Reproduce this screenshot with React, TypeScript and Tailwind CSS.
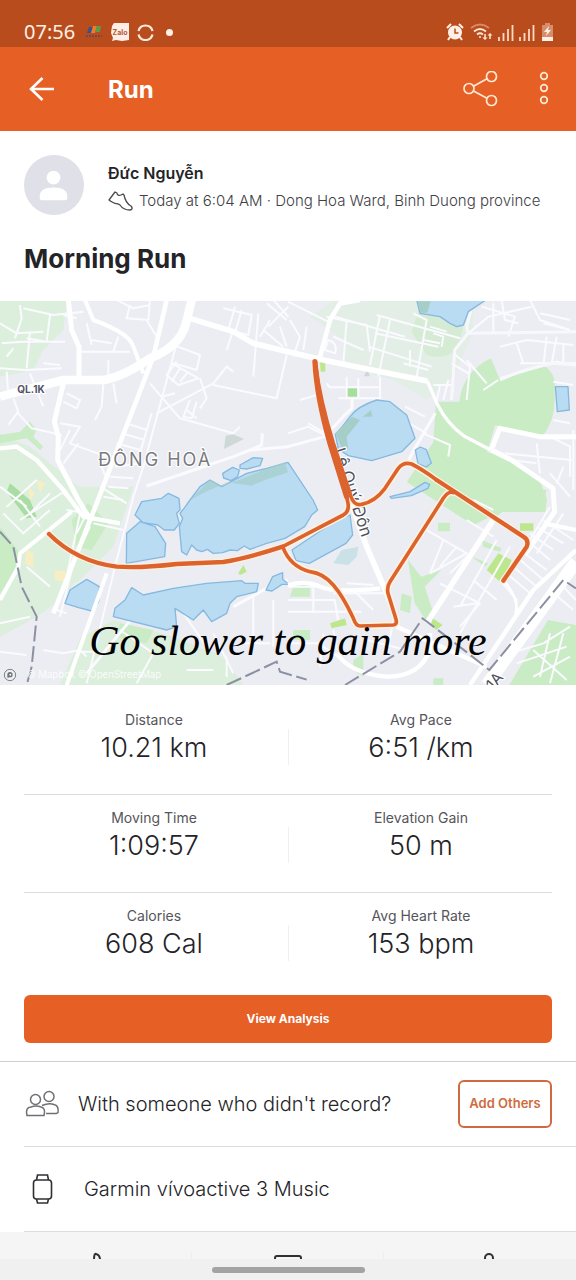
import React from "react";

const stats = [
  [
    { label: "Distance", value: "10.21 km" },
    { label: "Avg Pace", value: "6:51 /km" },
  ],
  [
    { label: "Moving Time", value: "1:09:57" },
    { label: "Elevation Gain", value: "50 m" },
  ],
  [
    { label: "Calories", value: "608 Cal" },
    { label: "Avg Heart Rate", value: "153 bpm" },
  ],
];

function StatusBar() {
  return (
    <div className="flex h-[47px] items-end justify-between bg-[#b94c1d] px-6 pb-[3px] text-[#fff0e6]">
      <div className="flex items-center gap-2">
        <span className="font-['Noto_Sans',sans-serif] text-[20px] leading-6">07:56</span>
        <svg className="ml-0.5" width="18" height="16" viewBox="0 0 18 16" aria-hidden="true">
          <path d="M4 3h4l-2 6H2z" fill="#35548f" />
          <path d="M8 2h4l-2 7H6z" fill="#f07a2a" />
          <path d="M12 2h4l-1 6h-5z" fill="#5d9a49" />
          <path d="M1 12h16" stroke="#6d4a55" strokeWidth="2" strokeDasharray="2 1" />
        </svg>
        <svg width="18" height="18" viewBox="0 0 18 18" role="img" aria-label="Zalo">
          <path d="M3 0h15v17l-7 1-6-1-4 1 1-3-2-5 1-7z" fill="#ffeee5" />
          <text x="9" y="12" textAnchor="middle" fontSize="7" fontWeight="700" fontFamily="Inter, sans-serif" fill="#b05a38">Zalo</text>
        </svg>
        <svg width="17" height="17" viewBox="0 0 17 17" fill="none" stroke="#ffeadd" strokeWidth="2.2" aria-hidden="true">
          <path d="M1.500 7A7.200 7.200 0 0 1 15.500 7M1.500 10.500A7.200 7.200 0 0 0 15.500 10.500" />
        </svg>
        <span className="ml-1 size-[7px] rounded-full bg-[#fff0e6]" />
      </div>
      <div className="flex items-center gap-1 pb-[3px]">
        <svg width="18" height="18" viewBox="0 0 18 18" aria-hidden="true">
          <circle cx="9" cy="9.500" r="7" fill="#fff0e6" />
          <path d="M1 5l4-4M17 5l-4-4M4 14l-2 3M14 14l2 3" stroke="#fff0e6" strokeWidth="2" />
          <path d="M9 5.500v4.500h3.500" fill="none" stroke="#b94c1d" strokeWidth="1.500" />
        </svg>
        <svg className="ml-0.5" width="23" height="18" viewBox="0 0 23 18" fill="none" stroke="#ffe6d6" strokeWidth="1.800" aria-hidden="true">
          <path d="M1 5Q10-2 19 5" stroke="#d98c69" />
          <path d="M4 8.500q6-5 12 0M7 11.500q3-2.500 6 0" />
          <circle cx="10" cy="14" r="1" fill="#ffe6d6" stroke="none" />
          <path d="M15 11v5M20 16v-5" strokeWidth="1.500" />
          <path d="M12.500 14.500h5L15 17zM17.500 12.500h5L20 10z" fill="#ffe6d6" stroke="none" />
        </svg>
        {[0, 1].map((n) => (
          <svg key={n} width="17" height="17" viewBox="0 0 17 17" stroke="#ffd9c3" strokeWidth="1.800" aria-hidden="true">
            <path d="M2 17v-4M6.500 17V9M11 17V5M15.500 17V1" />
          </svg>
        ))}
        <svg className="-mr-0.5 ml-0.5" width="13" height="18" viewBox="0 0 13 18" aria-hidden="true">
          <path d="M4 0h5v2h3v16H1V2h3z" fill="#d78d6b" />
          <path d="M1 14h11v4H1z" fill="#fff0e6" />
          <path d="M8 3L3 9h3l-1 4 5-6H7z" fill="#fff0e6" />
        </svg>
      </div>
    </div>
  );
}

function Header() {
  return (
    <header className="flex h-[84px] items-center bg-[#e66026] px-6 text-white">
      <button type="button" aria-label="Back" className="flex size-9 items-center justify-center">
        <svg width="26" height="26" viewBox="0 0 26 26" fill="none" stroke="currentColor" strokeWidth="2.600">
          <path d="M25 13H2M13.500 2L2 13l11.500 11" />
        </svg>
      </button>
      <h1 className="ml-12 flex-1 pt-0.5 text-[24px] leading-8 font-bold">Run</h1>
      <button type="button" aria-label="Share" className="flex size-9 items-center justify-center">
        <svg width="36" height="36" viewBox="0 0 36 36" fill="none" stroke="#ffe9d5" strokeWidth="1.700">
          <circle cx="7" cy="17.500" r="5" />
          <circle cx="29.500" cy="5.500" r="5" />
          <circle cx="29.500" cy="29.500" r="5" />
          <path d="M11.500 15.200L25 7.800M11.500 20L25 27.200" />
        </svg>
      </button>
      <button type="button" aria-label="More options" className="-mr-[10px] ml-7 flex size-9 items-center justify-center">
        <svg width="12" height="36" viewBox="0 0 12 36" fill="none" stroke="#ffe9d5" strokeWidth="1.700">
          <circle cx="6" cy="5" r="3.300" />
          <circle cx="6" cy="17" r="3.300" />
          <circle cx="6" cy="29" r="3.300" />
        </svg>
      </button>
    </header>
  );
}

function RouteMap() {
  return (
    <figure className="relative">
      <svg className="block w-full" viewBox="0 3 1728 1152" role="img" aria-label="Map of the run">
        <rect y="0" width="1728" height="1160" fill="#ecedf3" />

        {/* Parks and woodland */}
        <g fill="#dcefdc">
          <path d="M0 0H200L190 90 130 150 100 210 0 230z" />
          <path d="M0 400L90 440 260 580 330 600 350 690 300 760 180 900 110 950 0 1010z" />
          <path d="M200 560h200l-60 180-110 110-50-80z" />
          <path d="M1000 0h420l0 100-60 130-80 70-100-60-150-40 0-80-100-70z" fill="#e3efe6" />
          <path d="M340 960l180 50 150 60 60 85H180l60-140z" />
        </g>
        <g fill="#c9ecc5">
          <path d="M1308 305h70q10-90 95-130l25 60 130-42q30 20 36 50v60q0 60-38 108l-140-35-25 80 70 20 90 70 20 50-5 40H1500l-80 40-200-130 80-120z" />
          <path d="M1260 20l60 20 70 40-20 70q-40 30-90 15l-45-70z" fill="#d5ebd3" />
          <path d="M0 405l60-10 30-30 20 25-10 20 30 30-10 10-40-35-80 15z" />
          <path d="M30 550l60 50 20 50-30 5-60-80z" fill="#a9dda2" />
          <path d="M0 680l60 80-20 60-40 60z" />
          <path d="M215 660l50-50 60 60-50 80-45-10z" />
          <path d="M360 970l100 20-20 40-90-20z" />
          <path d="M1320 570h320l-8 30-60-20-80 68-120-40z" />
          <path d="M1644 960l84 15v180h-200z" />
          <path d="M1224 780l40 50 60-20-50 50 30 90-20 20-40-60zM1205 880l30 10-5 50-30-10zM1314 668h36v26h-36zM880 860l50-10v40h-60zM880 990h50v30h-50zM1060 1080l30-20v70l-30-20z" />
          <path d="M1445 720l60 25-5 10-50-15zM1415 770l50 20-10 10zM1300 1135h30v20h-30z" />
        </g>
        <g fill="#bce78d">
          <path d="M1495 760l40 20-30 70-45-40zM1560 670h40v22h-40zM990 970l45-15 5 20-45 10zM1298 955l30 20-20 15-15-15zM715 820l15-25 10 20-20 10zM960 185h16v30h-14z" />
          <path d="M1038 264h34v26h-34z" fill="#a5df9b" />
        </g>
        <g fill="#f7efc3">
          <path d="M110 540l25 10-15 30zM80 750l20 10v45l-25-15zM165 810l35 5-5 30-30-5zM85 560l20 20-15 20z" />
        </g>
        <g fill="#ced8d7">
          <path d="M700 403l32 14-60 30 5-40zM1102 207l8 22h-18z" />
        </g>

        {/* Side streets */}
        <g fill="none" stroke="#fafaff" strokeWidth="6" strokeLinejoin="round">
          <path d="M0 70l50 30 80-5M60 15l5 40-20 60M70 25l90 20 90-10M150 45l-10 80-60-10M190 45l40 10M5 130l60-5 130 0M20 170l20-25M90 95l-10 110M0 205l75 5 110-5M90 220l40 100M20 215l5 70M130 190l50 5M240 155h150M355 110l-15 45M260 70l15 65M275 120l60 10M325 180v70M310 250l-5 70-20 40M340 250l10 60M200 280l40 20-10 25-40-20M40 295l15 40-30 40M50 335l45 50 90 20M180 370l60 10-30 50 110 40M180 450l30-60M190 490l45-60" />
          <path d="M390 15l-10 40 65 5 5-60M440 60l30 50M350 0l50 25 50-10M520 135l80 30-10 45-70-20M515 190l80 45-60 20-35-30 30-40M540 205l-25 40M565 215l-25 30M470 340l170-90 40-50 20 15M640 255l190 40 30-130M600 235l20 60-20 30M485 290l40-10M450 250l90 105 160 45 20-20M570 300l-20 50 25 5 15-50M560 330l30 25M380 370l60 20-20 70 35-120M365 400l70 20M350 430l70 20M345 500l80-10M330 530l70 5M325 560l60 5M310 590l60 10" />
          <path d="M530 130l-100 370-30 90-50 190-90 370M345 480l-40 20 15 40M670 25l85 20-10 60-60-15 20-70M725 30l-20 70M700 90l-20 60M775 40l-15 190M810 60l-30 50M800 10l60 50M820 0l45 50M865 20l-60 60M790 90l60 50M840 80l20 60" />
          <path d="M864 5l120 60M870 60l30 50-20 60M920 80l-10 70M980 50l120 25 10 80M1005 50l210 60M1000 110l90 40M1140 45l-30 150M1130 45l250 70M1170 60l-35 170M1125 100l190 40M1105 140l190 60M1230 150v50M1240 40l40 20-30 170M1290 80l50 15M1300 100l30 10-5 30M1270 120l50 10M1210 190l75 20M1040 60l-10 130M985 120q30 10 20 40l-30-10z" />
          <path d="M980 250l10 12h150M1040 230v65M1075 235v60M1140 230v65M1015 295h130M1057 295v20M1300 255h60l-5 45M1320 255l-10 50M1345 240l-15 60M1355 190l50 30M1360 160l50 40-10 100M1400 180l60 70M1450 270l45-30M1445 20l100 30-20 60M1480 10v90M1505 0l10 60 40 10M1405 100l60-50 130-30M1590 0l30 60 90 30M1620 40l90 20M1630 70l80 20M1550 130l20 60M1500 140l80-20 140 15M1640 110l-10 90M1670 110l-15 80M1560 190l168 0M1690 130v60M1500 235l170-50 58 10M1660 245l60 10M1660 360l50 10M1610 430l10 90M1515 460l200 20M1530 480l80 10M1650 410l60 30v90M1720 390v180M1650 520l60 70M1690 500l-20 50" />
          <path d="M864 400l60-20 50 25M925 370l60 35M900 300l50-15M1215 320l60 30M1270 400l80 35-5 35M1210 360l70 40M10 640l60 60 80-70M60 600l60 80M20 620l90-80M0 560l80 60M90 640l60-60M80 800l70 60M60 660l140-90M200 630l60 10-30 60M220 610l-30-30M280 670l90 20M300 560l80 50M200 830l40-190M180 950l40-160 50-110M200 940l-30-10M0 970l90-20M0 1055l80 10M130 1050l60 10 50-10 20 20M360 990l100 70-50 90M240 1055l60 0M550 940l70 100M640 1000l60 120M680 1070v60M560 1110h80M760 890v150M820 900v140M730 1030h80" />
          <path d="M864 860h90M864 935h220M940 850v90M864 900h140l10 60M1060 870l60 60M1040 850l80 5M1000 880l150 0M1280 690l120 70-110 60M1330 720l-40 100M1410 760l-60 60M1370 740l-50 60M1400 660l80 50M1420 600l60 30M1490 720l-110 200M1530 740l-150 260M1420 840l70 60M1320 850l120 60-60 70M1360 920l70-10M1500 840l50 60-5 50M1560 750l80 60M1580 720l70 60M1590 700l70 50M1610 680l80 50M1630 660l90 60M1550 770l80 70M1540 800l70 60M1520 820l70 60M1650 620l-60 100M1690 640l-80 120M1650 870l70 60M1690 860l38 40M1530 1060l100-30 80-50M1550 1090l150-50M1600 1130l110-60M1650 1000l-30 130M1690 1000l-40 150M1600 1050l100 90M864 1030l90 0 60 40M970 1000l-10 100M1000 990l10 60M1100 1020l120 30M1180 960l-20 110" />
        </g>
        <g fill="none" stroke="#fafaff" strokeWidth="9" strokeLinejoin="round">
          <path d="M440 558L700 470 750 450 864 440M750 450l35-15 2-35" />
          <path d="M1420 0l-20 80 4 20-40 50-5 90-5 60M1400 100l328 -5M1500 240q60-30 160-50l68 5" stroke="#f8f8fc" />
          <path d="M864 440l110-30 60-65 22-20v-30M1306 340l-70 120-10 20M260 1120l140-170M700 920l100-55 64-25" />
        </g>

        {/* Lakes */}
        <g fill="#b9dcf3" stroke="#85b9e0" strokeWidth="4" strokeLinejoin="round">
          <path d="M570 600L600 560 630 540 665 560 740 520 800 505 864 487 939 600 953 630 935 645 914 680 855 715 800 730 750 748 733 738 712 752 690 750 668 758 640 760 622 748 606 755 590 750 575 735 560 765 545 755 538 680 548 655 540 640 552 625z" />
          <path d="M668 520l30-18 20 8-5 20-20 12-22-8zM720 495l40-22 28 2-8 22-40 10-20-2z" />
          <path d="M405 645l20-40 60-10 20-15 32 15 3 35-10 10 8 30-15 20-30 0-20-15-45-8zM380 700l40-35 45 15 32 50-3 40-115 20z" />
          <path d="M195 910l15-40 50-32 38 22-2 45-20 28-40-10z" />
          <path d="M395 863l35 22 90-20 100-15 105-8 10 8 40 0-5 25-60 15-20 20-10 30-45 25-25-35-30 30-55-35 5 55-30 10-160-40 5-25 30-25z" />
          <path d="M798 870l20-40 30-12 0 20 18 15-20 0-30 20z" />
          <path d="M1250 0l10 40 60 10 30 20 20 10 20-5 15-40 60-40z" />
          <path d="M1006 403q22-22 44-53 20-30 80-50l40 5 50 40 25 70-40 40-90 27-70-15-30-20z" />
          <path d="M1246 450l15-9 18 8 15 40-15 12-25-10zM1170 590l60-15 45-28 14 6-5 12-50 22-60 8zM1666 260h38l4 70-36 5z" />
          <path d="M876 750L1010 660l40-15 8 60-20 25-110 60-40-8z" />
        </g>
        <g fill="#a6cec9">
          <path d="M570 600L630 540l35 20 140-55 50-18 9 30-60 20-50 20-70-10-60 25z" opacity=".75" />
          <path d="M1006 400l50-50 24 10-40 50 5 38-20-5zM1088 350l25-20 4 20zM1252 4h40l-10 34-20 0z" />
          <path d="M1000 790l25-40 50-10-5 30-25 25z" fill="#c9e1e7" />
        </g>

        {/* Main roads */}
        <g fill="none" stroke="#fff" strokeLinejoin="round">
          <path d="M0 290L190 240H310Q370 230 450 175 540 140 558 70L575 0" strokeWidth="26" />
          <path d="M205 0L215 90 237 140V230M190 250L163 365 175 410 173 480 235 600 275 665" strokeWidth="15" />
          <path d="M255 0L280 60Q390 100 400 140L430 220" strokeWidth="12" />
          <path d="M500 0L460 170 410 300 340 480 290 610 160 940" strokeWidth="14" />
          <path d="M0 445l50-5 60 40 80 90 60 80 110 20" strokeWidth="13" />
          <path d="M570 55L700 95 760 130 864 155 970 180 1090 205 1282 243" strokeWidth="17" />
          <path d="M1080 0L1020 10 990 60 960 170" strokeWidth="14" />
          <path d="M1282 243l30 70q30 60 80 95l80 42" strokeWidth="10" />
          <path d="M1474 450l25-65 120 25h109M1474 450l60 30 125 85 5 70-90 130" strokeWidth="15" />
          <path d="M215 635L60 760 55 800 0 900M320 820L200 1155" strokeWidth="12" />
          <path d="M1050 600l50 140 60 140 30 80M1480 660l-200 310" strokeWidth="17" />
          <path d="M1630 670l98 20" strokeWidth="13" />
          <path d="M864 855Q920 840 960 860T1140 865M1190 980l110 50 160 70M1010 1060q40 60 150 70 100 0 130-80M1290 1000v60M1728 750L1600 870 1410 1155" strokeWidth="13" />
          <path d="M1728 785L1460 1155" strokeWidth="38" />
          <path d="M1510 840q60 70 30 120" strokeWidth="8" />
        </g>
        <g fill="none" stroke="#8c90a3" strokeWidth="6" strokeDasharray="48 14">
          <path d="M0 695l40 45 25 120 45 90-15 150-15 55" />
          <path d="M680 1155l150-70 10 30 80 24M1035 1155L1200 1055l68-100 130 100 70 55L1690 840l38 25" />
        </g>

        {/* Place names */}
        <g fontFamily="Inter, sans-serif" fill="#7a7a80" stroke="#fff" paintOrder="stroke" strokeWidth="7" strokeLinejoin="round">
          <text x="52" y="278" fontSize="30" fontWeight="700" fill="#54546a">QL.1K</text>
          <text x="295" y="499" fontSize="54" letterSpacing="6">ĐÔNG HOÀ</text>
          <text x="1000" y="450" fontSize="50" fill="#50535d" transform="rotate(72 1000 450)">Lê Quý Đôn</text>
          <text x="1480" y="1172" fontSize="46" fill="#4d4f5b" transform="rotate(-50 1480 1172)">1A</text>
        </g>

        {/* Recorded track: pale casing under the orange line */}
        <g fill="none" stroke="#fff3df" strokeWidth="20" strokeLinecap="round" strokeLinejoin="round">
          <path d="M147 702Q230 785 350 800 420 805 530 792L670 786Q740 775 848 740L1030 645Q1048 635 1044 610M848 740Q870 800 930 815 970 820 1000 855 1030 890 1060 955 1068 978 1080 978L1180 975Q1192 974 1188 958L1164 880Q1160 860 1170 845L1330 595Q1345 572 1360 578" />
          <path d="M945 190Q950 290 995 430L1045 580Q1060 620 1085 613 1125 605 1155 565L1195 505Q1210 485 1235 492 1270 510 1310 540L1570 710Q1588 720 1580 740L1510 842" />
        </g>
        <g fill="none" stroke="#dd632e" strokeLinecap="round" strokeLinejoin="round">
          <path d="M147 702Q230 785 350 800 420 805 530 792L670 786Q740 775 848 740" strokeWidth="13" />
          <path d="M848 740L1030 645Q1048 635 1044 610L1040 590" strokeWidth="11" />
          <path d="M848 740Q870 800 930 815 970 820 1000 855 1030 890 1060 955 1068 978 1080 978L1180 975Q1192 974 1188 958L1164 880Q1160 860 1170 845L1330 595Q1345 572 1360 578" strokeWidth="11" />
          <path d="M945 185Q950 290 990 430L1040 590" strokeWidth="16" />
          <path d="M948 200Q960 300 1000 430L1050 580Q1060 620 1085 613 1125 605 1155 565L1195 505Q1210 485 1235 492 1270 510 1310 540" strokeWidth="11" />
          <path d="M1310 540L1570 710Q1588 720 1580 740L1510 842" strokeWidth="13" />
        </g>

        <g transform="translate(30 1125)">
          <circle r="17" fill="#eef0f2" stroke="#7c8287" strokeWidth="3" />
          <path d="M-8 8V-1a8 8 0 1 1 8 8z" fill="#6f7479" />
          <circle r="3" fill="#fff" cx="1" cy="-1" />
        </g>
        <text x="80" y="1135" fontSize="29" fontFamily="Inter, sans-serif" fill="#fff" opacity=".85">© Mapbox © OpenStreetMap</text>
      </svg>
      <figcaption className="absolute inset-x-0 bottom-4 text-center font-['Liberation_Serif',serif] text-[42px] leading-[56px] font-medium whitespace-nowrap text-black italic">
        Go slower to gain more
      </figcaption>
    </figure>
  );
}

export default function App() {
  return (
    <div className="bg-white font-[Inter,sans-serif] text-[#242428]">
      <StatusBar />
      <Header />
      <main>
        <section className="flex h-[170px] flex-col px-6 pt-6">
          <div className="flex items-center gap-6">
            <svg className="size-[60px] shrink-0" viewBox="0 0 61 61" role="img" aria-label="Profile picture">
              <circle cx="30.500" cy="30.500" r="30.500" fill="#dfe0e8" />
              <circle cx="30" cy="23" r="7" fill="#fff" />
              <path d="M16 42q0-9 14-9t14 9v2q0 2-2 2H18q-2 0-2-2z" fill="#fff" />
            </svg>
            <div className="min-w-0 pt-1">
              <p className="text-[16px] leading-7 font-semibold">Đức Nguyễn</p>
              <p className="flex items-center gap-[6px] text-[15px] leading-7 font-light whitespace-nowrap text-[#404045]">
                <svg className="shrink-0" width="25" height="20" viewBox="0 0 25 20" fill="none" stroke="#4a4a4e" strokeWidth="1.300" strokeLinejoin="round" aria-hidden="true">
                  <path d="M1 9L7 1l2 1c0 2 2 3 4 2l2-1 1 1c1 5 3 9 7 11 2 2 1 4-1 4-5 0-8-2-10-5-2-2-4-1-6-2-2-1-4-2-5-3z" />
                </svg>
                Today at 6:04 AM · Dong Hoa Ward, Binh Duong province
              </p>
            </div>
          </div>
          <h2 className="mt-6 text-[26px] leading-10 font-bold">Morning Run</h2>
        </section>

        <RouteMap />

        <section className="px-6 pt-3">
          <div className="divide-y divide-[#dcdcdf]">
            {stats.map((row) => (
              <dl key={row[0].label} className="relative grid h-[98px] grid-cols-2 pt-[13px] text-center">
                {row.map((s) => (
                  <div key={s.label} className="pl-0.5 first:pr-1 first:pl-0">
                    <dt className="text-[14px] leading-5 text-[#55555a]">{s.label}</dt>
                    <dd className="text-[27px] leading-9 font-light">{s.value}</dd>
                  </div>
                ))}
                <div aria-hidden="true" className="absolute top-8 left-1/2 h-9 w-px bg-[#f0f0f3]" />
              </dl>
            ))}
          </div>
          <button type="button" className="mt-1 h-12 w-full rounded-md bg-[#e66026] text-[12px] font-bold text-white">
            View Analysis
          </button>
        </section>

        <section className="mt-[18px] border-t border-[#cfcfd2]">
          <div className="ml-6 flex h-[85px] items-center border-b border-[#dcdcdf] pr-6">
            <svg width="36" height="28" viewBox="0 0 36 28" fill="none" stroke="#707074" strokeWidth="1.500" aria-hidden="true">
              <circle cx="11.500" cy="9.500" r="5" />
              <circle cx="25" cy="6.500" r="5" />
              <path d="M3 25.500q-2-8 4-8.500 5-2 10 0 5 1 3 8.500zM18 15.500q7-3 12-1 5 1 4 8-1 1-2 1H22" />
            </svg>
            <p className="ml-[18px] flex-1 text-[20px] leading-7 font-light whitespace-nowrap">With someone who didn't record?</p>
            <button type="button" className="h-12 w-[94px] rounded-md border-2 border-[#cf6a3e] text-[13px] font-semibold whitespace-nowrap text-[#cf6a3e]">
              Add Others
            </button>
          </div>
          <div className="ml-6 flex h-[85px] items-center border-b border-[#dcdcdf]">
            <svg width="36" height="32" viewBox="0 0 36 32" fill="none" stroke="#303034" strokeWidth="1.600" aria-hidden="true">
              <rect x="9.500" y="7" width="18" height="19" rx="3" />
              <path d="M12.500 7l1-5h10l1 5M12.500 26l1 4h10l1-4" />
            </svg>
            <p className="ml-6 text-[20px] leading-7 font-light">Garmin vívoactive 3 Music</p>
          </div>
        </section>
      </main>

      <nav className="grid h-[27px] grid-cols-3 divide-x divide-[#eeeeee] overflow-hidden bg-[#f5f5f5] pt-5 text-[#303034]">
        <button type="button" aria-label="Give kudos" className="flex h-6 justify-center">
          <svg width="24" height="24" viewBox="0 0 24 24" fill="none" stroke="currentColor" strokeWidth="2">
            <path d="M10 8q0-7 2-6 4 1 4 6v14H5V10z" />
          </svg>
        </button>
        <button type="button" aria-label="Comment" className="flex h-6 justify-center">
          <svg width="28" height="24" viewBox="0 0 28 24" fill="none" stroke="currentColor" strokeWidth="2">
            <path d="M1 22V6q0-2 2-2h22q2 0 2 2v16z" />
          </svg>
        </button>
        <button type="button" aria-label="Add people" className="flex h-6 justify-center">
          <svg width="32" height="24" viewBox="0 0 32 24" fill="none" stroke="currentColor" strokeWidth="2">
            <circle cx="25" cy="6" r="4" />
            <path d="M17 22q0-9 8-9t6 9z" />
          </svg>
        </button>
      </nav>
      <div className="flex h-[22px] items-center justify-center bg-[#f0f0f0]">
        <span className="h-[6px] w-[153px] rounded-full bg-[#a3a3a3]" />
      </div>
    </div>
  );
}
